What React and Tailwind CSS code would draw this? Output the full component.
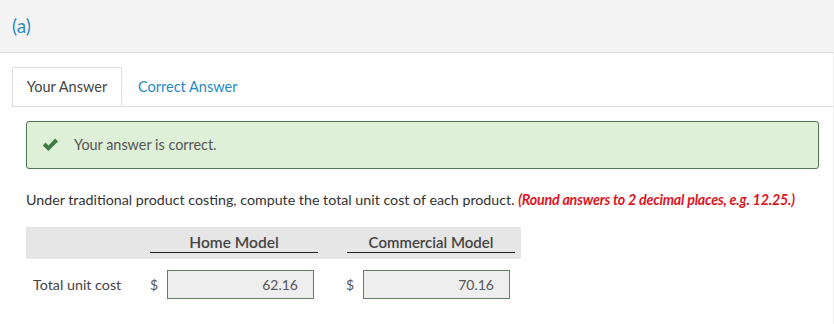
const CheckIcon = () => (
  <svg width="17" height="14" viewBox="0 0 17 14" className="shrink-0">
    <path d="M0.8 7.4 L3.6 4.6 L6.4 7.4 L13.2 0.6 L16 3.4 L6.4 13 Z" fill="#3f7a3f" />
  </svg>
);

const AnswerCell = ({ value }) => (
  <div className="flex items-center">
    <span className="w-[17px] text-[14px] text-[#555]">$</span>
    <div className="w-[147px] h-[29px] border border-[#5f7f5f] bg-[#eeeeee] flex items-center justify-end pr-[15px] text-[14px] text-[#555]">
      {value}
    </div>
  </div>
);

const App = () => {
  return (
    <div className="w-[834px] h-[324px] bg-white overflow-hidden font-['Lato','Liberation_Sans',sans-serif] text-[#333]">
      <div className="h-[53px] bg-[#f4f4f4] border-b border-[#dcdcdc] flex items-center pl-[12px]">
        <span className="text-[19px] text-[#2f8bc4]">(a)</span>
      </div>

      <div className="border-r border-[#eeeeee] h-[271px]">
        <div className="pt-[14px] pl-[12px]">
          <div className="flex border-b border-[#dddddd] h-[40px]">
            <div className="w-[110px] border border-b-0 border-[#dddddd] rounded-t-[2px] flex items-center justify-center text-[14.5px] text-[#444]">
              Your Answer
            </div>
            <div className="pl-[16px] flex items-center text-[14.5px] text-[#1f8ac4]">Correct Answer</div>
          </div>
        </div>

        <div className="px-[26px] pt-[14px] pr-[14px]">
          <div className="h-[48px] border border-[#4f7a4f] rounded-[3px] bg-[#dff0d8] flex items-center pl-[15px] gap-[15px]">
            <CheckIcon />
            <span className="text-[14.4px] text-[#555]">Your answer is correct.</span>
          </div>
        </div>

        <p className="pl-[26px] pt-[20px] text-[14.25px] text-[#333]">
          Under traditional product costing, compute the total unit cost of each product.{' '}
          <span className="text-[#e0141e] font-bold italic tracking-[-0.2px]">(Round answers to 2 decimal places, e.g. 12.25.)</span>
        </p>

        <div className="ml-[26px] mt-[17px] w-[495px]">
          <div className="h-[32px] bg-[#e6e6e6] flex items-end pb-[6px]">
            <div className="w-[124px]" />
            <div className="w-[168px] border-b border-[#222] text-center text-[15.5px] font-semibold text-[#444] leading-[20px]">
              Home Model
            </div>
            <div className="w-[29px]" />
            <div className="w-[168px] border-b border-[#222] text-center text-[15px] font-semibold text-[#444] leading-[20px]">
              Commercial Model
            </div>
          </div>
          <div className="flex items-center pt-[11px]">
            <div className="w-[124px] pl-[7px] text-[14.3px] text-[#444]">Total unit cost</div>
            <AnswerCell value="62.16" />
            <div className="w-[32px]" />
            <AnswerCell value="70.16" />
          </div>
        </div>
      </div>
    </div>
  );
};

export default App;
